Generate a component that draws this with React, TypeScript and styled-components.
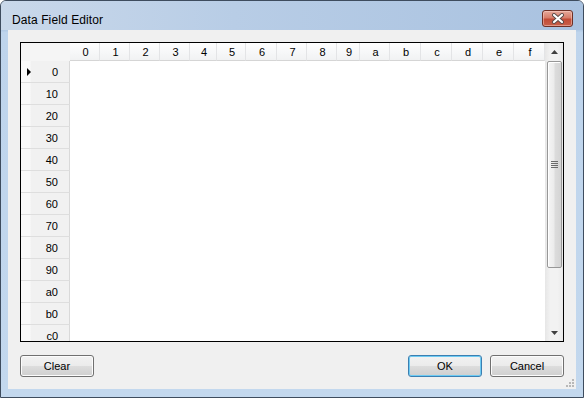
import React from 'react'
import styled, { createGlobalStyle } from 'styled-components'

const GlobalStyle = createGlobalStyle`
  html, body {
    margin: 0;
    padding: 0;
    background: #ffffff;
  }
  * {
    box-sizing: border-box;
  }
`

const COLUMNS: { label: string; width: number }[] = [
  { label: '0', width: 30 },
  { label: '1', width: 30 },
  { label: '2', width: 30 },
  { label: '3', width: 30 },
  { label: '4', width: 27 },
  { label: '5', width: 29 },
  { label: '6', width: 31 },
  { label: '7', width: 30 },
  { label: '8', width: 30 },
  { label: '9', width: 23 },
  { label: 'a', width: 30 },
  { label: 'b', width: 31 },
  { label: 'c', width: 31 },
  { label: 'd', width: 31 },
  { label: 'e', width: 31 },
  { label: 'f', width: 31 },
]

const ROWS = ['0', '10', '20', '30', '40', '50', '60', '70', '80', '90', 'a0', 'b0', 'c0']

const gridTemplate = `49px ${COLUMNS.map(c => `${c.width}px`).join(' ')}`

const Frame = styled.div`
  width: 584px;
  height: 398px;
  border: 1px solid #3e4c5e;
  border-radius: 6px 6px 0 0;
  background: linear-gradient(to bottom, #c6d7ea 0, #b3cbe6 30px, #bed4ec 31px, #c3d8ee 100%);
  padding: 0 7px 8px;
  display: flex;
  flex-direction: column;
  font-family: 'Liberation Sans', Arial, sans-serif;
  overflow: hidden;
`

const TitleBar = styled.div`
  height: 29px;
  display: flex;
  align-items: flex-start;
  justify-content: space-between;
  background: linear-gradient(to right, #c9d8ea 0, #b8cde6 40%, #a9c2e0 100%);
  margin: 0 -7px;
  padding: 0 10px 0 11px;
`

const Title = styled.div`
  font-size: 12px;
  color: #000;
  padding-top: 12px;
  letter-spacing: 0.1px;
`

const CloseButton = styled.div`
  width: 31px;
  height: 17px;
  margin-top: 9px;
  border: 1px solid #6e3026;
  border-radius: 3px;
  background: linear-gradient(to bottom, #e6a99b 0, #d77d6a 45%, #c24b36 55%, #c8604a 100%);
  box-shadow: inset 0 0 0 1px rgba(255, 220, 210, 0.45);
  display: flex;
  align-items: center;
  justify-content: center;
`

const Client = styled.div`
  position: relative;
  flex: 1;
  background: #f0f0f0;
  padding: 12px;
  display: flex;
  flex-direction: column;
`

const GridBox = styled.div`
  height: 300px;
  border: 1px solid #000;
  background: #fff;
  display: flex;
  overflow: hidden;
`

const Table = styled.div`
  flex: 1;
  overflow: hidden;
  font-size: 11px;
  color: #000;
`

const HeaderRow = styled.div`
  display: grid;
  grid-template-columns: ${gridTemplate};
  height: 18px;
`

const Corner = styled.div`
  background: #f5f5f5;
  border-right: 1px solid #f5f5f5;
`

const ColHeader = styled.div`
  background: linear-gradient(to bottom, #ffffff 0, #f7f8f9 50%, #f1f2f3 100%);
  border-right: 1px solid #e3e4e6;
  border-bottom: 1px solid #d5d5d5;
  display: flex;
  align-items: center;
  justify-content: center;
  padding-left: 2px;
`

const Row = styled.div`
  display: grid;
  grid-template-columns: 49px 1fr;
  height: 22px;
`

const RowHeader = styled.div`
  position: relative;
  background: linear-gradient(to right, #fafafa 0, #fafafa 9px, #f1f1f1 10px, #f1f1f1 100%);
  border-right: 1px solid #d9d9d9;
  border-bottom: 1px solid #dedede;
  display: flex;
  align-items: center;
  justify-content: flex-end;
  padding-right: 11px;
`

const CurrentMark = styled.span`
  position: absolute;
  left: 6px;
  top: 7px;
  width: 0;
  height: 0;
  border-top: 4px solid transparent;
  border-bottom: 4px solid transparent;
  border-left: 4px solid #000;
`

const Cells = styled.div`
  background: #fff;
`

const ScrollBar = styled.div`
  width: 18px;
  display: flex;
  flex-direction: column;
  background: linear-gradient(to right, #e6e6e6 0, #f2f2f2 30%, #f2f2f2 70%, #e9e9e9 100%);
`

const ArrowButton = styled.div`
  height: 17px;
  display: flex;
  align-items: center;
  justify-content: center;
`

const Thumb = styled.div`
  height: 207px;
  margin: 1px 1px 0 2px;
  border: 1px solid #979797;
  border-radius: 2px;
  background: linear-gradient(to right, #f5f5f5 0, #ececec 45%, #dcdcdc 55%, #d4d4d4 100%);
  box-shadow: inset 1px 1px 0 #fff;
  display: flex;
  align-items: center;
  justify-content: center;
`

const Track = styled.div`
  flex: 1;
`

const Footer = styled.div`
  margin-top: 13px;
  display: flex;
  justify-content: space-between;
`

const ButtonGroup = styled.div`
  display: flex;
  gap: 8px;
`

const Button = styled.div<{ $default?: boolean }>`
  width: 74px;
  height: 22px;
  border: 1px solid ${({ $default }) => ($default ? '#3c7fb1' : '#707070')};
  border-radius: 3px;
  background: linear-gradient(to bottom, #f2f2f2 0, #ebebeb 50%, #dddddd 51%, #cfcfcf 100%);
  box-shadow: inset 0 0 0 1px ${({ $default }) => ($default ? '#6ecbf3' : '#fcfcfc')};
  display: flex;
  align-items: center;
  justify-content: center;
  font-size: 11px;
  color: #000;
`

const Grip = styled.svg`
  position: absolute;
  right: 2px;
  bottom: 2px;
`

const gripDots = [
  [8, 0],
  [8, 3],
  [5, 3],
  [8, 6],
  [5, 6],
  [2, 6],
]

const App = () => {
  return (
    <>
      <GlobalStyle />
      <Frame>
        <TitleBar>
          <Title>Data Field Editor</Title>
          <CloseButton>
            <svg width="14" height="11" viewBox="0 0 14 11">
              <path d="M3 2 L11 9 M11 2 L3 9" stroke="#5a4a48" strokeWidth="4" strokeLinecap="round" />
              <path d="M3 2 L11 9 M11 2 L3 9" stroke="#ffffff" strokeWidth="2.2" strokeLinecap="round" />
            </svg>
          </CloseButton>
        </TitleBar>

        <Client>
          <GridBox>
            <Table>
              <HeaderRow>
                <Corner />
                {COLUMNS.map(c => (
                  <ColHeader key={c.label}>{c.label}</ColHeader>
                ))}
              </HeaderRow>
              {ROWS.map((r, i) => (
                <Row key={r}>
                  <RowHeader>
                    {i === 0 && <CurrentMark />}
                    {r}
                  </RowHeader>
                  <Cells />
                </Row>
              ))}
            </Table>

            <ScrollBar>
              <ArrowButton>
                <svg width="7" height="4" viewBox="0 0 7 4">
                  <path d="M0 4 L3.5 0 L7 4 Z" fill="#404040" />
                </svg>
              </ArrowButton>
              <Thumb>
                <svg width="7" height="8" viewBox="0 0 7 8">
                  {[0, 2, 4, 6].map(y => (
                    <rect key={y} x="0" y={y} width="7" height="1" fill="#6b6b6b" />
                  ))}
                </svg>
              </Thumb>
              <Track />
              <ArrowButton>
                <svg width="7" height="4" viewBox="0 0 7 4">
                  <path d="M0 0 L7 0 L3.5 4 Z" fill="#404040" />
                </svg>
              </ArrowButton>
            </ScrollBar>
          </GridBox>

          <Footer>
            <Button>Clear</Button>
            <ButtonGroup>
              <Button $default>OK</Button>
              <Button>Cancel</Button>
            </ButtonGroup>
          </Footer>

          <Grip width="10" height="8" viewBox="0 0 10 8">
            {gripDots.map(([x, y]) => (
              <rect key={`${x}-${y}`} x={x} y={y} width="2" height="2" fill="#b8b8b8" />
            ))}
          </Grip>
        </Client>
      </Frame>
    </>
  )
}

export default App
